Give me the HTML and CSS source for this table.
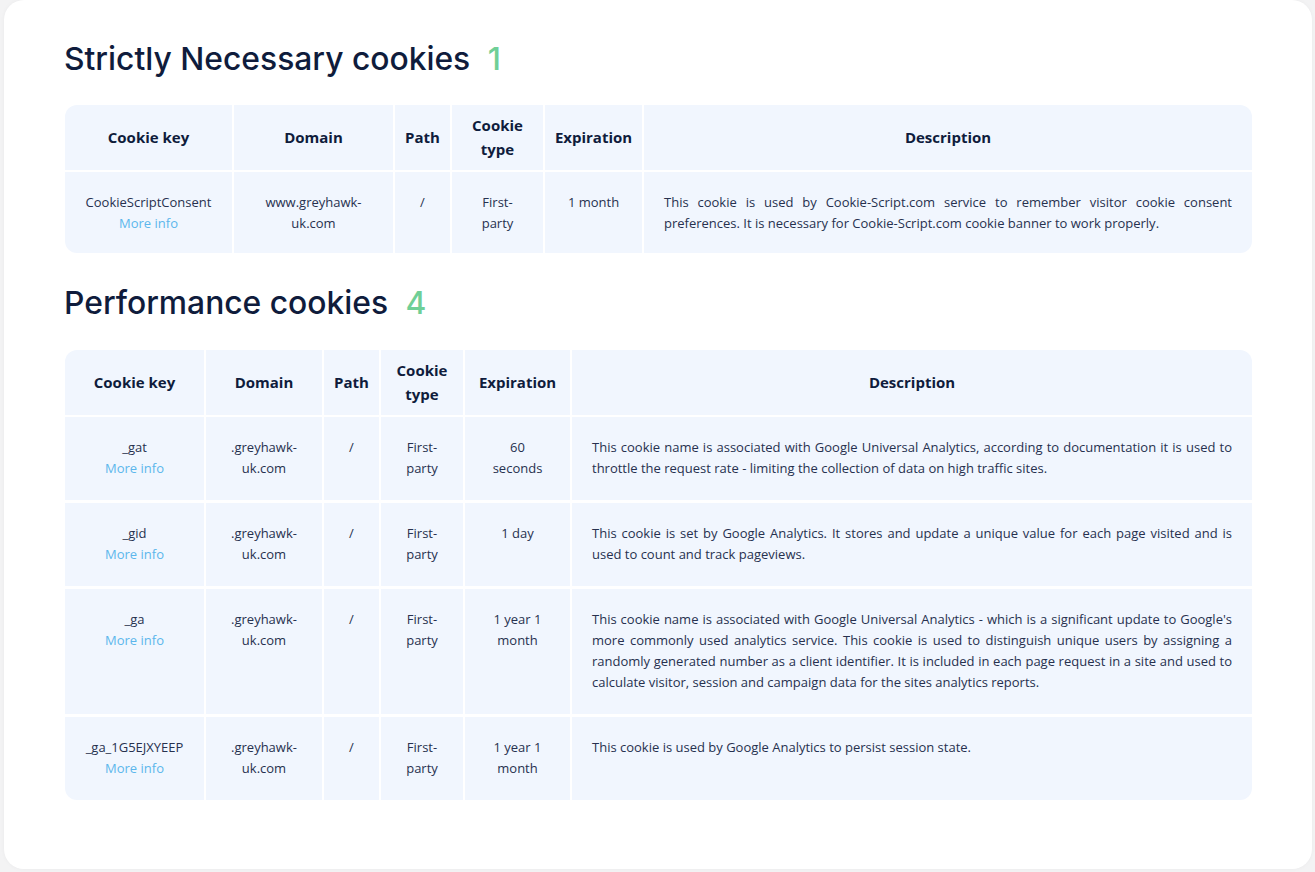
FILE: index.html
```html
<!DOCTYPE html>
<html lang="en">
<head>
<meta charset="utf-8">
<title>Cookies</title>
<link rel="stylesheet" href="styles.css">
</head>
<body>
<div class="card">
  <h2 class="section-title">Strictly Necessary cookies <span class="count">1</span></h2>
  <table class="cookie-table t1">
    <colgroup>
      <col class="c-key"><col class="c-domain"><col class="c-path"><col class="c-type"><col class="c-exp"><col class="c-desc">
    </colgroup>
    <thead>
      <tr><th>Cookie key</th><th>Domain</th><th>Path</th><th>Cookie type</th><th>Expiration</th><th>Description</th></tr>
    </thead>
    <tbody>
      <tr>
        <td>CookieScriptConsent<br><a class="more" href="#">More info</a></td>
        <td>www.greyhawk-uk.com</td>
        <td>/</td>
        <td>First-party</td>
        <td>1 month</td>
        <td class="desc">This cookie is used by Cookie-Script.com service to remember visitor cookie consent preferences. It is necessary for Cookie-Script.com cookie banner to work properly.</td>
      </tr>
    </tbody>
  </table>

  <h2 class="section-title second">Performance cookies <span class="count">4</span></h2>
  <table class="cookie-table t2">
    <colgroup>
      <col class="c-key"><col class="c-domain"><col class="c-path"><col class="c-type"><col class="c-exp"><col class="c-desc">
    </colgroup>
    <thead>
      <tr><th>Cookie key</th><th>Domain</th><th>Path</th><th>Cookie type</th><th>Expiration</th><th>Description</th></tr>
    </thead>
    <tbody>
      <tr>
        <td>_gat<br><a class="more" href="#">More info</a></td>
        <td>.greyhawk-uk.com</td>
        <td>/</td>
        <td>First-party</td>
        <td>60 seconds</td>
        <td class="desc">This cookie name is associated with Google Universal Analytics, according to documentation it is used to throttle the request rate - limiting the collection of data on high traffic sites.</td>
      </tr>
      <tr>
        <td>_gid<br><a class="more" href="#">More info</a></td>
        <td>.greyhawk-uk.com</td>
        <td>/</td>
        <td>First-party</td>
        <td>1 day</td>
        <td class="desc">This cookie is set by Google Analytics. It stores and update a unique value for each page visited and is used to count and track pageviews.</td>
      </tr>
      <tr>
        <td>_ga<br><a class="more" href="#">More info</a></td>
        <td>.greyhawk-uk.com</td>
        <td>/</td>
        <td>First-party</td>
        <td>1 year 1 month</td>
        <td class="desc">This cookie name is associated with Google Universal Analytics - which is a significant update to Google's more commonly used analytics service. This cookie is used to distinguish unique users by assigning a randomly generated number as a client identifier. It is included in each page request in a site and used to calculate visitor, session and campaign data for the sites analytics reports.</td>
      </tr>
      <tr>
        <td>_ga_1G5EJXYEEP<br><a class="more" href="#">More info</a></td>
        <td>.greyhawk-uk.com</td>
        <td>/</td>
        <td>First-party</td>
        <td>1 year 1 month</td>
        <td class="desc">This cookie is used by Google Analytics to persist session state.</td>
      </tr>
    </tbody>
  </table>
</div>
</body>
</html>
```

FILE: styles.css
```css
* { box-sizing: border-box; }

html, body {
  margin: 0;
  padding: 0;
  background: #f3f3f4;
  height: 872px;
  overflow: hidden;
}

body {
  padding: 0 3px 3px 4px;
}

.card {
  background: #ffffff;
  border-radius: 20px;
  height: 869px;
  padding: 39px 60px 0 61px;
  box-shadow: 0 0 4px rgba(0, 0, 0, 0.04);
}

.section-title {
  margin: 0 0 26px -1px;
  font-family: Inter, "Noto Sans", sans-serif;
  font-weight: 500;
  font-size: 31.8px;
  line-height: 40px;
  color: #0f1c3c;
  letter-spacing: 0;
}

.section-title.second {
  margin-bottom: 27px;
}

.count {
  color: #6fcf97;
  margin-left: 9px;
}

.cookie-table {
  width: 1187px;
  table-layout: fixed;
  border-collapse: separate;
  border-spacing: 0;
  background: #f1f6fe;
  border-radius: 12px;
  margin-bottom: 30px;
  font-family: "Open Sans", "Noto Sans", sans-serif;
}

.t1 .c-key { width: 167px; }
.t1 .c-domain { width: 161px; }
.t1 .c-path { width: 57px; }
.t1 .c-type { width: 93px; }
.t1 .c-exp { width: 99px; }
.t1 .c-desc { width: 610px; }

.t2 .c-key { width: 139px; }
.t2 .c-domain { width: 118px; }
.t2 .c-path { width: 57px; }
.t2 .c-type { width: 84px; }
.t2 .c-exp { width: 107px; }
.t2 .c-desc { width: 682px; }

.cookie-table th {
  height: 67px;
  padding: 7px 6px 9px;
  font-size: 15px;
  font-weight: 700;
  line-height: 24px;
  color: #0f1c3c;
  text-align: center;
  vertical-align: middle;
  border-bottom: 2px solid #ffffff;
}

.cookie-table th + th,
.cookie-table td + td {
  border-left: 2px solid #ffffff;
}

.cookie-table td {
  padding: 20px 19px 21px;
  font-size: 13px;
  line-height: 21px;
  color: #27314f;
  text-align: center;
  vertical-align: top;
}

.t1 td {
  padding-bottom: 19px;
}

.cookie-table tbody tr + tr td {
  border-top: 3px solid #ffffff;
}

.cookie-table td.desc {
  text-align: justify;
  padding-left: 20px;
  padding-right: 20px;
}

.more {
  color: #5cb6ec;
  text-decoration: none;
}
```
